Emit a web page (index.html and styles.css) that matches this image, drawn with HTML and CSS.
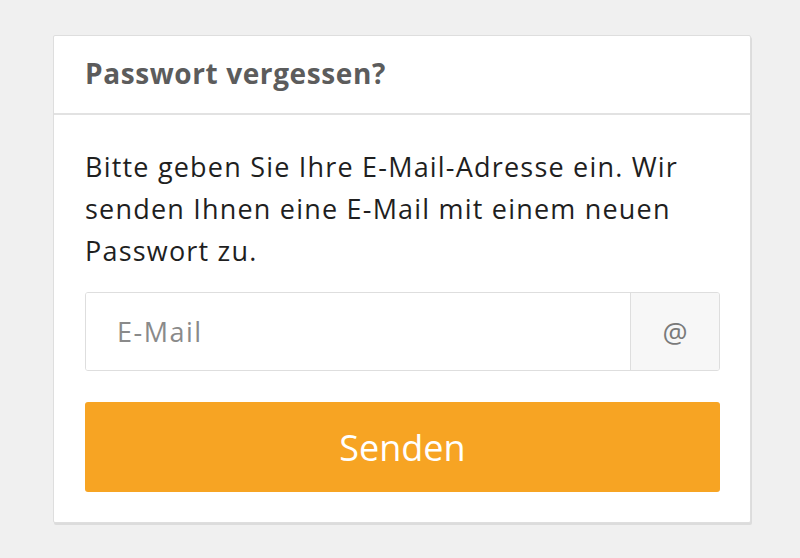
FILE: index.html
```html
<!DOCTYPE html>
<html lang="de">
<head>
<meta charset="utf-8">
<title>Passwort vergessen?</title>
<link rel="stylesheet" href="styles.css">
</head>
<body>
<div class="card">
  <div class="card-header">Passwort vergessen?</div>
  <div class="card-body">
    <p class="intro">Bitte geben Sie Ihre E-Mail-Adresse ein. Wir senden Ihnen eine E-Mail mit einem neuen Passwort zu.</p>
    <div class="input-group">
      <input class="input" type="email" placeholder="E-Mail">
      <span class="addon">@</span>
    </div>
    <button class="btn" type="button">Senden</button>
  </div>
</div>
</body>
</html>
```

FILE: styles.css
```css
html, body {
  margin: 0;
  padding: 0;
}
body {
  background: #f0f0f0;
  font-family: "Open Sans", "Liberation Sans", sans-serif;
  width: 800px;
  height: 558px;
  overflow: hidden;
}
.card {
  margin: 35px 0 0 53px;
  width: 696px;
  background: #fff;
  border: 1px solid #dedede;
  border-radius: 2px;
  box-shadow: 1px 2px 0 #dcdcdc;
}
.card-header {
  padding: 21px 31px 24px;
  font-size: 28px;
  line-height: 32px;
  font-weight: 700;
  letter-spacing: 0.6px;
  color: #5c5c5c;
  border-bottom: 2px solid #e2e2e2;
}
.card-body {
  padding: 31px 30px 30px 31px;
}
.intro {
  margin: 0 0 20px;
  font-size: 27px;
  line-height: 42px;
  letter-spacing: 1.2px;
  color: #1f1f1f;
}
.input-group {
  display: flex;
  height: 79px;
  box-sizing: border-box;
  border: 1px solid #dedede;
  border-radius: 3px;
  overflow: hidden;
}
.input {
  flex: 1;
  min-width: 0;
  border: 0;
  outline: none;
  padding: 0 0 0 31px;
  font-family: inherit;
  font-size: 27px;
  letter-spacing: 1.5px;
  color: #222;
  background: #fff;
}
.input::placeholder {
  color: #8a8a8a;
}
.addon {
  width: 88px;
  display: flex;
  align-items: center;
  justify-content: center;
  border-left: 1px solid #dedede;
  background: #f7f7f7;
  color: #7a7a7a;
  font-size: 28px;
}
.btn {
  display: block;
  width: 100%;
  margin-top: 31px;
  height: 90px;
  border: 0;
  border-radius: 3px;
  background: #f7a423;
  color: #fff;
  font-family: inherit;
  font-size: 36px;
  padding: 0;
  cursor: pointer;
}
```
